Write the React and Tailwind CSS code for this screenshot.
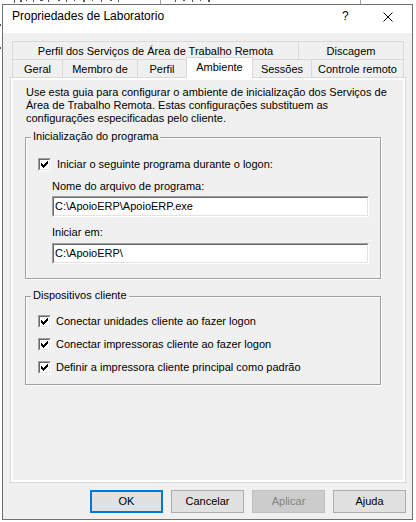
import React from "react";

function Check() {
  const starts = [2, 3, 4, 3, 2, 1, 0];
  return (
    <svg width="9" height="9" viewBox="0 0 9 9" shapeRendering="crispEdges">
      {starts.map((s, c) => (
        <rect key={c} x={1 + c} y={1 + s} width="1" height="3" fill="#000" />
      ))}
    </svg>
  );
}

function CheckBox() {
  return (
    <div className="w-[13px] h-[13px] shrink-0 flex border border-t-[#a0a0a0] border-l-[#a0a0a0] border-r-white border-b-white">
      <div className="flex-1 flex border border-t-[#696969] border-l-[#696969] border-r-[#e3e3e3] border-b-[#e3e3e3] bg-white">
        <Check />
      </div>
    </div>
  );
}

function TextBox({ value }) {
  return (
    <div className="ml-[26px] w-[317px] h-[21px] flex border border-t-[#a0a0a0] border-l-[#a0a0a0] border-r-white border-b-white">
      <div className="flex-1 flex items-center pl-[1px] border border-t-[#696969] border-l-[#696969] border-r-[#e3e3e3] border-b-[#e3e3e3] bg-white whitespace-nowrap">
        {value}
      </div>
    </div>
  );
}

function Tab({ w, children, noLeft, right }) {
  return (
    <div
      className={
        "h-[18px] flex items-center justify-center pt-[2px] border-t border-[#d9d9d9] whitespace-nowrap " +
        w +
        (noLeft ? "" : " border-l") +
        (right ? " border-r" : "")
      }
    >
      {children}
    </div>
  );
}

function GroupBox({ title, className, children }) {
  return (
    <div
      className={
        "relative ml-[12px] w-[356px] border border-[#a0a0a0] shadow-[inset_1px_1px_0_#ffffff,1px_1px_0_#ffffff] " +
        className
      }
    >
      <div className="absolute -top-[8px] left-[5px] px-[2px] bg-[#f0f0f0] whitespace-nowrap">
        {title}
      </div>
      {children}
    </div>
  );
}

function Button({ children, kind }) {
  const base = "w-[73px] h-[23px] flex items-center justify-center";
  if (kind === "default")
    return <div className={base + " bg-[#e1e1e1] border-2 border-[#0078d7]"}>{children}</div>;
  if (kind === "disabled")
    return (
      <div className={base + " bg-[#cccccc] border border-[#bfbfbf] text-[#838383]"}>{children}</div>
    );
  return <div className={base + " bg-[#e1e1e1] border border-[#adadad]"}>{children}</div>;
}

const specks = [
  [14, 1, 3], [20, 2, 2], [26, 1, 1], [33, 1, 2], [40, 3, 1], [48, 1, 2], [58, 2, 1],
  [66, 1, 2], [74, 1, 1], [83, 2, 2], [92, 1, 1], [101, 1, 2], [110, 2, 1], [118, 1, 2],
  [175, 1, 2], [183, 2, 1], [192, 1, 2], [200, 1, 1], [208, 2, 2],
];

export default function App() {
  return (
    <div className="relative w-[416px] h-[522px] bg-white overflow-hidden font-['Liberation_Sans',Arial,sans-serif] text-[11px] leading-[13px] text-black">
      {/* desktop behind the window */}
      {specks.map(([x, w, h], i) => (
        <div
          key={i}
          className="absolute top-0 bg-[#555555]"
          style={{ left: x, width: w, height: h }}
        />
      ))}
      <div className="absolute top-0 left-[160px] w-[1px] h-[4px] bg-[#a0a0a0]" />
      <div className="absolute top-0 left-[360px] w-[1px] h-[4px] bg-[#a0a0a0]" />
      <div className="absolute top-[24px] left-0 w-[1px] h-[2px] bg-[#555]" />
      <div className="absolute top-[47px] left-0 w-[1px] h-[2px] bg-[#555]" />

      {/* window */}
      <div className="mt-[4px] ml-[2px] w-[411px] h-[516px] border border-[#707070] flex flex-col bg-[#f0f0f0]">
        {/* title bar */}
        <div className="h-[28px] shrink-0 bg-white flex items-start pt-[4px] pl-[9px] text-[12px] leading-[14px]">
          <span className="whitespace-nowrap">Propriedades de Laboratorio</span>
          <span className="flex-1" />
          <span className="w-[7px]">?</span>
          <span className="ml-[34px] mt-[3px] pr-[19px]">
            <svg width="10" height="10" viewBox="0 0 10 10">
              <path d="M0.5 0.5 L9.5 9.5 M9.5 0.5 L0.5 9.5" stroke="#000" strokeWidth="1" />
            </svg>
          </span>
        </div>

        {/* body */}
        <div className="flex-1 flex flex-col pt-[8px]">
          {/* tabs */}
          <div className="pl-[9px] relative z-10">
            <div className="flex">
              <Tab w="w-[286px]">Perfil dos Serviços de Área de Trabalho Remota</Tab>
              <Tab w="w-[106px]" right>Discagem</Tab>
            </div>
            <div className="flex h-[18px] items-start">
              <Tab w="w-[50px]">Geral</Tab>
              <Tab w="w-[75px]">Membro de</Tab>
              <Tab w="w-[49px]">Perfil</Tab>
              <div className="relative z-10 -mt-[2px] w-[67px] h-[21px] bg-white border-t border-l border-r border-[#d9d9d9] flex justify-center pt-[3px] whitespace-nowrap">
                Ambiente
              </div>
              <Tab w="w-[58px]" noLeft>Sessões</Tab>
              <Tab w="w-[93px]" right>Controle remoto</Tab>
            </div>
          </div>

          {/* panel */}
          <div className="ml-[7px] w-[396px] h-[406px] shrink-0 border border-[#d9d9d9] bg-white p-[2px] flex">
            <div className="flex-1 bg-[#f0f0f0] flex flex-col">
              <p className="mt-[6px] pl-[13px]">
                Use esta guia para configurar o ambiente de inicialização dos Serviços de
                <br />
                Área de Trabalho Remota. Estas configurações substituem as
                <br />
                configurações especificadas pelo cliente.
              </p>

              <GroupBox title="Inicialização do programa" className="mt-[12px] h-[142px]">
                <div className="flex flex-col">
                  <div className="mt-[20px] ml-[12px] flex items-center gap-[6px] h-[13px]">
                    <CheckBox />
                    <span className="whitespace-nowrap">Iniciar o seguinte programa durante o logon:</span>
                  </div>
                  <div className="mt-[9px] ml-[26px]">Nome do arquivo de programa:</div>
                  <div className="mt-[3px]">
                    <TextBox value={"C:\\ApoioERP\\ApoioERP.exe"} />
                  </div>
                  <div className="mt-[9px] ml-[26px]">Iniciar em:</div>
                  <div className="mt-[4px]">
                    <TextBox value={"C:\\ApoioERP\\"} />
                  </div>
                </div>
              </GroupBox>

              <GroupBox title="Dispositivos cliente" className="mt-[17px] h-[89px]">
                <div className="flex flex-col gap-[10px] mt-[18px] ml-[12px]">
                  <div className="flex items-center gap-[5px] h-[13px]">
                    <CheckBox />
                    <span className="whitespace-nowrap">Conectar unidades cliente ao fazer logon</span>
                  </div>
                  <div className="flex items-center gap-[5px] h-[13px]">
                    <CheckBox />
                    <span className="whitespace-nowrap">Conectar impressoras cliente ao fazer logon</span>
                  </div>
                  <div className="flex items-center gap-[5px] h-[13px]">
                    <CheckBox />
                    <span className="whitespace-nowrap">Definir a impressora cliente principal como padrão</span>
                  </div>
                </div>
              </GroupBox>
            </div>
          </div>

          {/* buttons */}
          <div className="mt-[7px] pr-[6px] flex justify-end gap-[8px]">
            <Button kind="default">OK</Button>
            <Button>Cancelar</Button>
            <Button kind="disabled">Aplicar</Button>
            <Button>Ajuda</Button>
          </div>
        </div>
      </div>
    </div>
  );
}
